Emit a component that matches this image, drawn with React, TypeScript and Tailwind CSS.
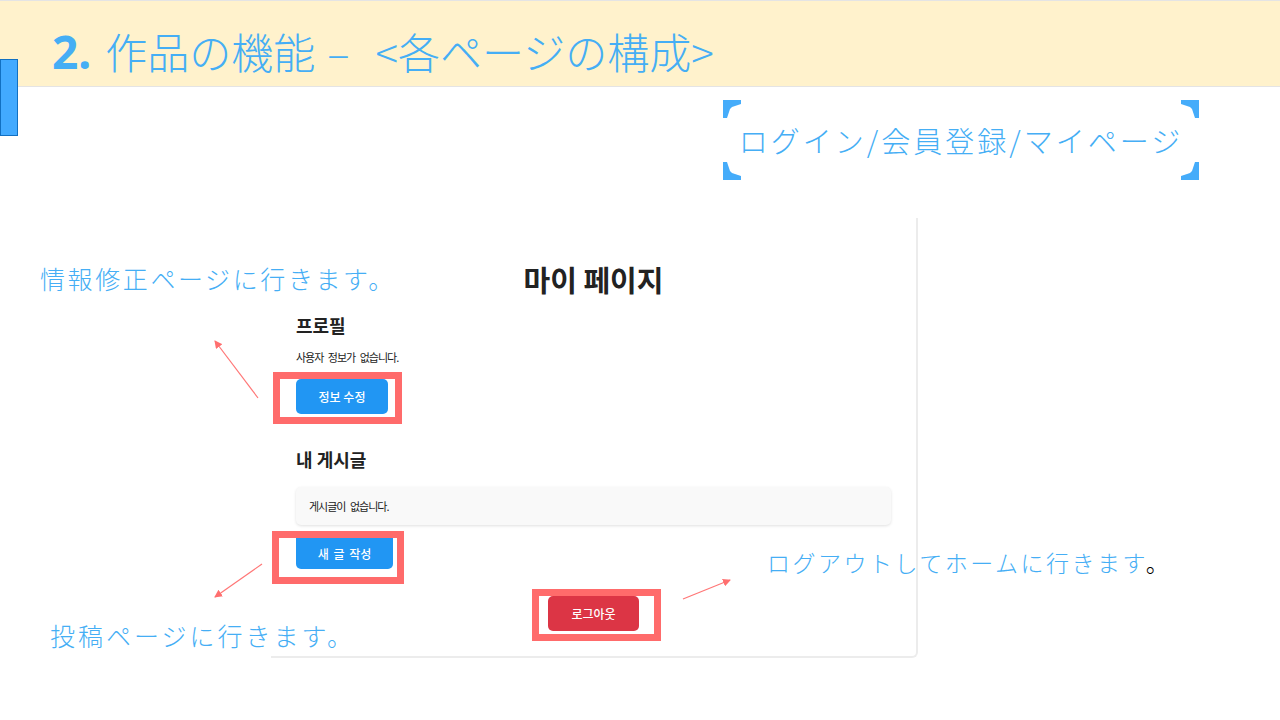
const jp = "font-['Noto_Sans_CJK_JP','Noto_Sans',sans-serif]";
const kr = "font-['Noto_Sans_CJK_KR','Noto_Sans',sans-serif]";

const Corner = ({ className, rotate }: { className: string; rotate: number }) => (
	<svg
		width="18"
		height="18"
		viewBox="0 0 18 18"
		className={`absolute ${className}`}
		style={{ transform: `rotate(${rotate}deg)` }}
	>
		<polygon points="0,0 18,0 18,4 9,7 7,9 4,18 0,18" fill="#45acfa" />
	</svg>
);

const Arrows = () => (
	<svg
		width="1280"
		height="720"
		className="absolute left-0 top-0 pointer-events-none"
	>
		<defs>
			<marker
				id="head"
				markerWidth="8"
				markerHeight="8"
				refX="7"
				refY="4"
				orient="auto"
				markerUnits="userSpaceOnUse"
			>
				<path d="M0,0 L8,4 L0,8 z" fill="#ff6f6f" />
			</marker>
		</defs>
		<line x1="258" y1="398" x2="215" y2="341" stroke="#ff7676" strokeWidth="1.2" markerEnd="url(#head)" />
		<line x1="262" y1="564" x2="215" y2="597" stroke="#ff7676" strokeWidth="1.2" markerEnd="url(#head)" />
		<line x1="683" y1="599" x2="730" y2="580" stroke="#ff7676" strokeWidth="1.2" markerEnd="url(#head)" />
	</svg>
);

export default function App() {
	return (
		<div className={`relative w-[1280px] h-[720px] overflow-hidden bg-white ${jp}`}>
			{/* header band */}
			<header className="h-[87px] bg-[#fff2cc] border-t border-b border-[#e4e4e4] pl-[52px] pt-[27px]">
				<h1 className="flex items-baseline text-[42px] leading-none font-light text-[#45aef5] whitespace-nowrap">
					<span className="font-['Noto_Sans',sans-serif] font-bold text-[46px]">2.</span>
					<span className="ml-[14px]">作品の機能</span>
					<span className="ml-[12px]">–</span>
					<span className="ml-[26px]">&lt;各ページの構成&gt;</span>
				</h1>
			</header>
			<div className="absolute left-0 top-[59px] w-[18px] h-[77px] bg-[#42aaff] border border-[#1170c2]" />

			{/* page label */}
			<div className="relative ml-[723px] mt-[13px] w-[476px] h-[80px] flex items-center justify-center">
				<Corner className="left-0 top-0" rotate={0} />
				<Corner className="right-0 top-0" rotate={90} />
				<Corner className="right-0 bottom-0" rotate={180} />
				<Corner className="left-0 bottom-0" rotate={270} />
				<span className="text-[29px] leading-none font-light tracking-[3px] text-[#45aef5] whitespace-nowrap">
					ログイン/会員登録/マイページ
				</span>
			</div>

			{/* screenshot of my page */}
			<section
				className={`ml-[271px] mt-[38px] w-[647px] border-r-2 border-b-2 border-[#ececec] rounded-br-[6px] pl-[25px] pr-[25px] pt-[47px] pb-[15px] text-[#222] ${kr}`}
			>
				<h2 className="text-center text-[29px] leading-none font-bold">마이 페이지</h2>

				<h3 className="mt-[22px] text-[18px] leading-none font-bold">프로필</h3>
				<p className="mt-[18px] text-[11px] leading-none tracking-[-1px] [word-spacing:3px]">사용자 정보가 없습니다.</p>
				<div className="mt-[9px] ml-[-23px] w-fit border-[7px] border-[#ff6b6b] pl-[16px] pr-[7px] pb-[3px]">
					<button className="w-[92px] h-[35px] rounded-[5px] bg-[#2196f3] text-white text-[12px] font-medium">
						정보 수정
					</button>
				</div>

				<h3 className="mt-[26px] text-[18px] leading-none font-bold">내 게시글</h3>
				<div className="mt-[19px] h-[38px] flex items-center pl-[13px] rounded-[5px] bg-[#f9f9f9] shadow-[0_1px_3px_rgba(0,0,0,0.12)] text-[11px] tracking-[-1px] [word-spacing:3px]">
					게시글이 없습니다.
				</div>
				<div className="mt-[6px] ml-[-24px] w-fit border-[7px] border-[#ff6b6b] pl-[17px] pr-[4px] pb-[8px]">
					<button className="w-[97px] h-[31px] rounded-b-[5px] bg-[#2196f3] text-white text-[12px] font-medium [word-spacing:2px]">
						새 글 작성
					</button>
				</div>

				<div className="mt-[5px] ml-[236px] w-fit border-[7px] border-[#ff6b6b] pl-[9px] pr-[15px] pb-[3px]">
					<button className="w-[91px] h-[35px] rounded-[5px] bg-[#dc3545] text-white text-[12px] font-medium">
						로그아웃
					</button>
				</div>
			</section>

			{/* annotations */}
			<p className="absolute left-[40px] top-[266px] text-[25px] leading-none font-light tracking-[2.6px] text-[#45aef5] whitespace-nowrap">
				情報修正ページに行きます。
			</p>
			<p className="absolute left-[50px] top-[623px] text-[25px] leading-none font-light tracking-[3px] text-[#45aef5] whitespace-nowrap">
				投稿ページに行きます。
			</p>
			<p className="absolute left-[767px] top-[551px] text-[23px] leading-none font-light tracking-[2.5px] text-[#45aef5] whitespace-nowrap">
				ログアウトしてホームに行きます<span className="text-black">。</span>
			</p>
			<Arrows />
		</div>
	);
}
